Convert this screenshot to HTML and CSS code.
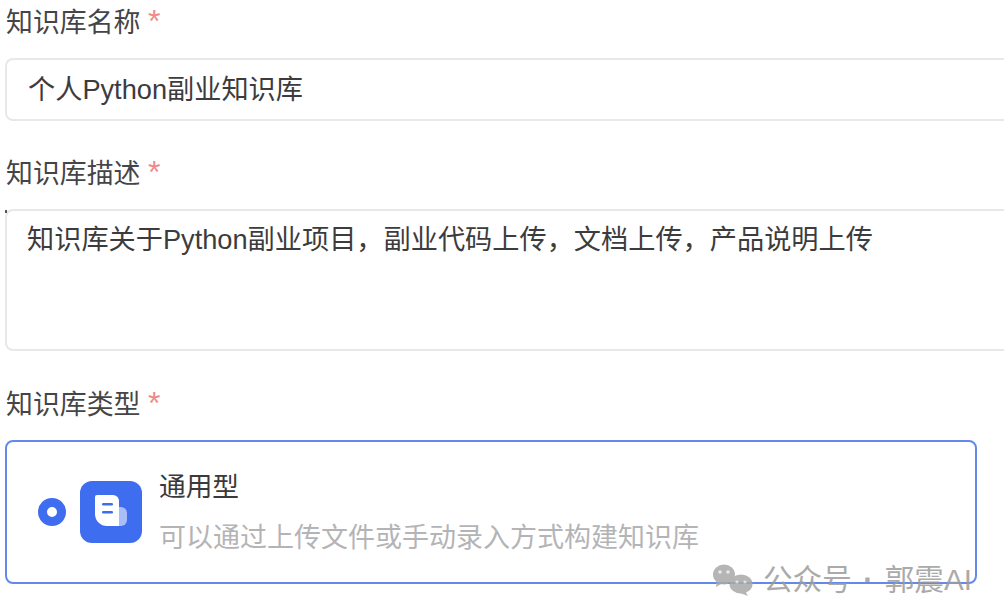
FILE: index.html
```html
<!DOCTYPE html>
<html>
<head>
  <title>知识库</title>
  <link rel="stylesheet" href="styles.css">
</head>
<body>
  <div class="form">
    <div class="label">知识库名称 <span class="star">*</span></div>
    <div class="field name-field">个人Python副业知识库</div>

    <div class="label">知识库描述 <span class="star">*</span></div>
    <div class="field desc-field">知识库关于Python副业项目，副业代码上传，文档上传，产品说明上传</div>

    <div class="label">知识库类型 <span class="star">*</span></div>
    <div class="type-card">
      <span class="radio"></span>
      <span class="type-icon">
        <svg width="36" height="36" viewBox="0 0 36 36">
          <rect x="20" y="13" width="14" height="19" rx="6" fill="#a9bdf8"/>
          <path d="M4 1h16a6 6 0 0 1 6 6v25H14A12 12 0 0 1 2 20V3a2 2 0 0 1 2-2z" fill="#fff"/>
          <rect x="9" y="9" width="11" height="2.6" rx="1.3" fill="#3f6df0"/>
          <rect x="9" y="17" width="11" height="2.6" rx="1.3" fill="#3f6df0"/>
        </svg>
      </span>
      <div class="type-text">
        <div class="type-title">通用型</div>
        <div class="type-desc">可以通过上传文件或手动录入方式构建知识库</div>
      </div>
    </div>
  </div>

  <div class="watermark">
    <svg class="wechat" width="40" height="32" viewBox="0 0 40 32">
      <ellipse cx="11" cy="10.5" rx="11" ry="10" fill="#a9a9a9"/>
      <path d="M4 16l-1 7 7-4z" fill="#a9a9a9"/>
      <ellipse cx="28" cy="20" rx="11.5" ry="9.5" fill="#a9a9a9"/>
      <path d="M32 27l3 5-8-3z" fill="#a9a9a9"/>
      <circle cx="7" cy="8" r="1.8" fill="#e4e4e4"/>
      <circle cx="15" cy="8" r="1.8" fill="#e4e4e4"/>
      <circle cx="24" cy="18" r="1.6" fill="#e4e4e4"/>
      <circle cx="32" cy="18" r="1.6" fill="#e4e4e4"/>
    </svg>
    <span class="mark-name">公众号</span>
    <span class="mark-dot">·</span>
    <span class="mark-name">郭震AI</span>
  </div>
</body>
</html>
```

FILE: styles.css
```css
body {
  font-family: "Liberation Sans", "Noto Sans CJK SC", sans-serif;
  background-color: #fff;
  margin: 0;
  width: 1008px;
  height: 606px;
  overflow: hidden;
  position: relative;
  color: #3c3c3e;
}

.form {
  padding: 4px 4px 0 5px;
}

.label {
  font-size: 26.9px;
  line-height: 36px;
  padding-left: 1px;
  color: #454547;
  position: relative;
  top: 1px;
}

.star {
  font-size: 32px;
  line-height: 0;
  color: #ee8a8a;
}

.field {
  box-sizing: border-box;
  border: 2px solid #e8e8ea;
  border-right: none;
  border-radius: 8px 0 0 8px;
  font-size: 27.2px;
  background-color: #fff;
  position: relative;
}

.name-field {
  height: 63px;
  line-height: 60px;
  padding-left: 21px;
  margin: 18px 0 34px;
}

.desc-field {
  height: 142px;
  line-height: 36px;
  padding: 11px 0 0 20px;
  margin: 18px 0 35px;
}

/* small dark speck on the corner of the box */
.desc-field::before {
  content: "";
  position: absolute;
  left: -2px;
  top: -1px;
  width: 2px;
  height: 3px;
  background-color: #555;
}

.type-card {
  box-sizing: border-box;
  width: 972px;
  height: 144px;
  margin-top: 18px;
  border: 2px solid #6489ea;
  border-radius: 8px;
  display: flex;
  align-items: center;
  padding-left: 31px;
}

.radio {
  box-sizing: border-box;
  width: 28px;
  height: 28px;
  border: 9.5px solid #3f6df0;
  border-radius: 50%;
  margin-right: 14px;
}

.type-icon {
  width: 62px;
  height: 62px;
  background-color: #3f6df0;
  border-radius: 12px;
  display: flex;
  align-items: center;
  justify-content: center;
  margin-right: 17px;
}

.type-title {
  font-size: 26.7px;
  line-height: 36px;
  color: #3a3a3c;
}

.type-desc {
  font-size: 27px;
  line-height: 36px;
  color: #b4b4b6;
  margin-top: 15px;
}

.watermark {
  position: absolute;
  left: 713px;
  top: 562px;
  display: flex;
  align-items: center;
  font-size: 29.6px;
  line-height: 36px;
  color: #9c9c9c;
  white-space: nowrap;
  opacity: 0.85;
}

.wechat {
  margin-right: 10px;
}

.mark-dot {
  width: 33px;
  text-align: center;
  font-weight: bold;
}
```
